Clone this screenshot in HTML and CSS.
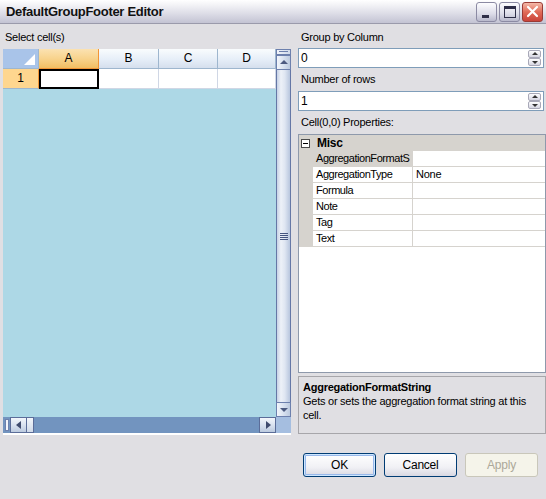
FILE: index.html
```html
<!DOCTYPE html>
<html>
<head>
<meta charset="utf-8">
<link rel="stylesheet" href="styles.css">
</head>
<body>
<div class="window">
  <div class="titlebar">
    <span class="title">DefaultGroupFooter Editor</span>
    <div class="tb-buttons">
      <div class="tb-btn"><span class="g-min"></span></div>
      <div class="tb-btn"><span class="g-max"></span></div>
      <div class="tb-btn close">
        <svg width="19" height="18" viewBox="0 0 19 18"><path d="M5 4 L14 13 M14 4 L5 13" stroke="#fff" stroke-width="2.2" stroke-linecap="round"/></svg>
      </div>
    </div>
  </div>
  <div class="body">
    <div class="left">
      <div class="label">Select cell(s)</div>
      <div class="grid">
        <div class="grid-main">
          <div class="cells">
            <div class="hdr-row">
              <div class="corner"><span class="corner-tri"></span></div>
              <div class="col-hdr active w60">A</div>
              <div class="col-hdr w60">B</div>
              <div class="col-hdr w59">C</div>
              <div class="col-hdr w58">D</div>
            </div>
            <div class="data-row">
              <div class="row-hdr">1</div>
              <div class="cell sel w60"></div>
              <div class="cell w60"></div>
              <div class="cell w59"></div>
              <div class="cell w58"></div>
            </div>
            <div class="empty"></div>
          </div>
          <div class="vscroll">
            <div class="v-split"><span></span></div>
            <div class="v-btn"><span class="tri-up"></span></div>
            <div class="v-thumb"><span class="grip"></span></div>
            <div class="v-btn"><span class="tri-down"></span></div>
          </div>
        </div>
        <div class="hscroll">
          <div class="h-split"></div>
          <div class="h-btn"><span class="tri-left"></span></div>
          <div class="h-thumb"></div>
          <div class="h-track"></div>
          <div class="h-btn"><span class="tri-right"></span></div>
          <div class="h-corner"></div>
        </div>
      </div>
    </div>
    <div class="right">
      <div class="label first">Group by Column</div>
      <div class="input">
        <span class="input-text">0</span>
        <div class="spin"><div class="spin-btn"><span class="s-up"></span></div><div class="spin-btn"><span class="s-down"></span></div></div>
      </div>
      <div class="label">Number of rows</div>
      <div class="input">
        <span class="input-text">1</span>
        <div class="spin"><div class="spin-btn"><span class="s-up"></span></div><div class="spin-btn"><span class="s-down"></span></div></div>
      </div>
      <div class="label">Cell(0,0) Properties:</div>
      <div class="propgrid">
        <div class="cat-row"><span class="expander"><span></span></span><span class="cat-name">Misc</span></div>
        <div class="prop-row selected"><div class="margin"></div><div class="pname">AggregationFormatS</div><div class="pval"></div></div>
        <div class="prop-row"><div class="margin"></div><div class="pname">AggregationType</div><div class="pval">None</div></div>
        <div class="prop-row"><div class="margin"></div><div class="pname">Formula</div><div class="pval"></div></div>
        <div class="prop-row"><div class="margin"></div><div class="pname">Note</div><div class="pval"></div></div>
        <div class="prop-row"><div class="margin"></div><div class="pname">Tag</div><div class="pval"></div></div>
        <div class="prop-row"><div class="margin"></div><div class="pname">Text</div><div class="pval"></div></div>
      </div>
      <div class="desc">
        <div class="desc-title">AggregationFormatString</div>
        <div class="desc-text">Gets or sets the aggregation format string at this cell.</div>
      </div>
      <div class="buttons">
        <div class="btn default">OK</div>
        <div class="btn">Cancel</div>
        <div class="btn disabled">Apply</div>
      </div>
    </div>
  </div>
</div>
</body>
</html>
```
FILE: styles.css
```css
* { box-sizing: border-box; }
html, body { margin: 0; padding: 0; }
body {
  font-family: "Liberation Sans", Arial, sans-serif;
  font-size: 11px;
  letter-spacing: -0.25px;
  color: #000;
  background: #e0dfe3;
}
.window {
  width: 546px;
  height: 499px;
  background: #e0dfe3;
  overflow: hidden;
}
.titlebar {
  height: 24px;
  display: flex;
  align-items: flex-start;
  justify-content: space-between;
  background: linear-gradient(#ffffff 0%, #f1f1f5 25%, #dcdce6 60%, #c3c3d3 100%);
  border-bottom: 1px solid #9a9aab;
}
.title {
  font-family: "Liberation Sans", Arial, sans-serif;
  font-weight: bold;
  font-size: 13px;
  letter-spacing: -0.3px;
  line-height: 23px;
  padding-left: 6px;
  color: #111;
}
.tb-buttons {
  display: flex;
  gap: 2px;
  padding-top: 2px;
  padding-right: 3px;
}
.tb-btn {
  width: 21px;
  height: 20px;
  border: 1px solid #8b8aa3;
  border-radius: 3px;
  background: linear-gradient(#fdfdff, #dcdce8 60%, #b9b9cc);
  position: relative;
}
.g-min {
  position: absolute;
  left: 5px;
  top: 12px;
  width: 7px;
  height: 3px;
  background: #2f2f48;
}
.g-max {
  position: absolute;
  left: 4px;
  top: 3px;
  width: 12px;
  height: 12px;
  border: 1px solid #2f2f48;
  border-top-width: 3px;
}
.tb-btn.close {
  border-color: #9a3b35;
  background: linear-gradient(#f4b8a8, #e06b58 50%, #c9433a);
  display: flex;
  align-items: center;
  justify-content: center;
}
.body {
  display: flex;
  height: 475px;
}
.left {
  width: 291px;
  padding-left: 3px;
}
.label {
  height: 25px;
  line-height: 26px;
  padding-left: 2px;
  white-space: nowrap;
}
.grid {
  width: 288px;
  height: 386px;
  border-bottom: 2px solid #ffffff;
  display: flex;
  flex-direction: column;
}
.grid-main {
  flex: 1;
  display: flex;
  min-height: 0;
}
.cells {
  width: 273px;
  display: flex;
  flex-direction: column;
}
.hdr-row, .data-row {
  display: flex;
  height: 20px;
}
.corner {
  width: 36px;
  background: #a9c4e9;
  border-right: 1px solid #9eb6ce;
  border-bottom: 1px solid #9eb6ce;
  position: relative;
}
.corner-tri {
  position: absolute;
  right: 3px;
  bottom: 3px;
  width: 0;
  height: 0;
  border-left: 11px solid transparent;
  border-bottom: 11px solid #ffffff;
}
.col-hdr {
  text-align: center;
  line-height: 19px;
  font-size: 12px;
  background: linear-gradient(#f9fcfd, #e6eef8 55%, #d5dfed);
  border-right: 1px solid #9eb6ce;
  border-bottom: 1px solid #9eb6ce;
}
.col-hdr.active {
  background: linear-gradient(#fbe2b2, #f8d38d 50%, #f2be63);
  border-right: 1px solid #f29536;
  border-bottom: 1px solid #f29536;
}
.w60 { width: 60px; }
.w59 { width: 59px; }
.w58 { width: 58px; }
.row-hdr {
  width: 36px;
  background: #fed68f;
  border-right: 1px solid #f29536;
  border-bottom: 1px solid #9eb6ce;
  text-align: center;
  line-height: 19px;
  font-size: 12px;
}
.cell {
  background: #fff;
  border-right: 1px solid #d0d7e5;
  border-bottom: 1px solid #d0d7e5;
}
.cell.sel {
  border: 2px solid #000;
}
.empty {
  flex: 1;
  background: #add8e6;
}
.vscroll {
  width: 15px;
  display: flex;
  flex-direction: column;
  background: #a5bee0;
}
.v-split {
  height: 6px;
  border: 1px solid #6d80ad;
  background: linear-gradient(to right, #f1f4fa, #cfd9ea);
  position: relative;
}
.v-split span {
  position: absolute;
  left: 2px;
  right: 2px;
  top: 1px;
  height: 1px;
  background: #6d80ad;
}
.v-btn {
  height: 15px;
  border: 1px solid #6d80ad;
  background: linear-gradient(to right, #f3f6fb, #d9e2f0 50%, #bccadf);
  position: relative;
}
.v-thumb {
  flex: 1;
  border-left: 1px solid #6577a6;
  border-right: 1px solid #6577a6;
  background: linear-gradient(to right, #c7d2e6, #edf1f8 30%, #dfe6f2 60%, #b8c6de);
  display: flex;
  align-items: center;
  justify-content: center;
}
.grip {
  width: 8px;
  height: 7px;
  background: repeating-linear-gradient(#45557f 0 1px, transparent 1px 2px);
}
.tri-up, .tri-down, .tri-left, .tri-right {
  position: absolute;
  width: 0;
  height: 0;
}
.tri-up {
  left: 3px;
  top: 4px;
  border-left: 4px solid transparent;
  border-right: 4px solid transparent;
  border-bottom: 4px solid #4c5a80;
}
.tri-down {
  left: 3px;
  top: 5px;
  border-left: 4px solid transparent;
  border-right: 4px solid transparent;
  border-top: 4px solid #4c5a80;
}
.hscroll {
  height: 16px;
  display: flex;
  background: #7294bf;
}
.h-split {
  width: 4px;
  margin-left: 2px;
  margin-right: 1px;
  margin-top: 2px;
  margin-bottom: 2px;
  border: 1px solid #6d80ad;
  background: #f3f6fb;
}
.h-btn {
  width: 17px;
  border: 1px solid #5b6d99;
  background: linear-gradient(#f3f6fb, #d9e2f0 50%, #bccadf);
  position: relative;
}
.h-thumb {
  width: 7px;
  border: 1px solid #5b6d99;
  border-left: none;
  background: linear-gradient(#f3f6fb, #d0dae9);
}
.h-track { flex: 1; }
.tri-left {
  left: 5px;
  top: 3px;
  border-top: 4px solid transparent;
  border-bottom: 4px solid transparent;
  border-right: 5px solid #3f4b6e;
}
.tri-right {
  left: 6px;
  top: 3px;
  border-top: 4px solid transparent;
  border-bottom: 4px solid transparent;
  border-left: 5px solid #3f4b6e;
}
.h-corner {
  width: 15px;
  background: #a5bee0;
}
.right {
  margin-left: 7px;
  width: 248px;
}
.right .label {
  height: 23px;
  line-height: 23px;
  padding-left: 3px;
}
.right .label.first {
  height: 24px;
  line-height: 26px;
}
.input {
  width: 246px;
  height: 20px;
  border: 1px solid #7f9db9;
  background: #fff;
  display: flex;
  align-items: center;
  justify-content: space-between;
  padding-left: 2px;
  padding-right: 2px;
  font-size: 12px;
}
.spin {
  display: flex;
  flex-direction: column;
}
.spin-btn {
  width: 13px;
  height: 8px;
  border: 1px solid #a8a8b8;
  border-radius: 2px;
  background: linear-gradient(#fdfdfe, #d6d6e2);
  position: relative;
}
.s-up, .s-down {
  position: absolute;
  left: 3px;
  width: 0;
  height: 0;
  border-left: 3px solid transparent;
  border-right: 3px solid transparent;
}
.s-up { top: 1px; border-bottom: 3px solid #333; }
.s-down { top: 2px; border-top: 3px solid #333; }
.propgrid {
  width: 248px;
  height: 239px;
  border: 1px solid #8e99ab;
  background: #fff;
}
.cat-row {
  height: 16px;
  background: #d6d3ce;
  display: flex;
  align-items: center;
}
.expander {
  width: 9px;
  height: 9px;
  margin-left: 2px;
  border: 1px solid #4a4a4a;
  background: #fff;
  position: relative;
}
.expander span {
  position: absolute;
  left: 1px;
  top: 3px;
  width: 5px;
  height: 1px;
  background: #000;
}
.cat-name {
  font-weight: bold;
  font-size: 12px;
  margin-left: 7px;
}
.prop-row {
  display: flex;
  height: 16px;
}
.margin {
  width: 14px;
  background: #d6d3ce;
}
.pname {
  width: 100px;
  line-height: 15px;
  padding-left: 3px;
  letter-spacing: -0.45px;
  border-right: 1px solid #d6d3ce;
  border-bottom: 1px solid #d6d3ce;
  white-space: nowrap;
  overflow: hidden;
}
.prop-row.selected .pname {
  background: #d6d3ce;
}
.pval {
  flex: 1;
  line-height: 15px;
  padding-left: 3px;
  border-bottom: 1px solid #d6d3ce;
}
.desc {
  margin-top: 3px;
  width: 248px;
  height: 58px;
  border: 1px solid #a7a6aa;
  padding: 3px 4px;
}
.desc-title {
  font-weight: bold;
  line-height: 14px;
}
.desc-text {
  line-height: 14px;
}
.buttons {
  display: flex;
  gap: 8px;
  margin-top: 19px;
  padding-left: 5px;
}
.btn {
  width: 73px;
  height: 24px;
  border: 1px solid #003c74;
  border-radius: 3px;
  background: linear-gradient(#ffffff, #f1f1f5 60%, #d8d8e2);
  text-align: center;
  line-height: 22px;
  font-size: 12px;
}
.btn.default {
  box-shadow: inset 0 0 0 1px #cee7ff, inset 0 0 0 2px #98b8ea;
}
.btn.disabled {
  border-color: #c9c7ba;
  background: #f5f4ea;
  color: #aca899;
}
```
